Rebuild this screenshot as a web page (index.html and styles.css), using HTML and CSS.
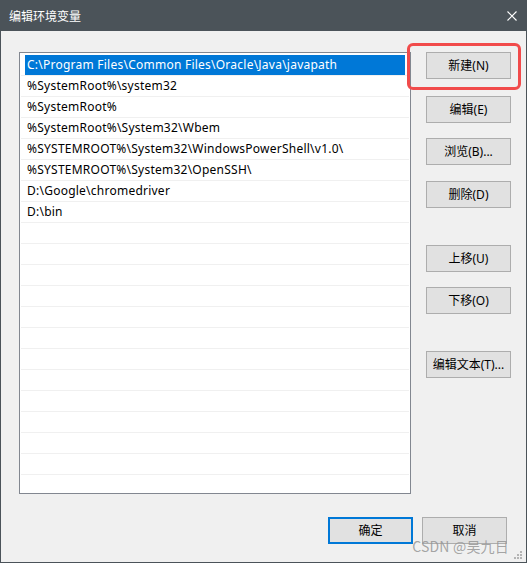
FILE: index.html
```html
<!DOCTYPE html>
<html lang="zh">
<head>
<meta charset="utf-8">
<title>编辑环境变量</title>
<link rel="stylesheet" href="styles.css">
</head>
<body>
<div class="window">
  <div class="titlebar">
    <span class="title">编辑环境变量</span>
    <svg class="close" width="10" height="10" viewBox="0 0 10 10"><path d="M0.5 0.5 L9.5 9.5 M9.5 0.5 L0.5 9.5" stroke="#ffffff" stroke-width="1.1" fill="none"/></svg>
  </div>
  <div class="body">
    <div class="main">
      <div class="list">
        <div class="row selected"><span>C:\Program Files\Common Files\Oracle\Java\javapath</span></div>
        <div class="row"><span>%SystemRoot%\system32</span></div>
        <div class="row"><span>%SystemRoot%</span></div>
        <div class="row"><span>%SystemRoot%\System32\Wbem</span></div>
        <div class="row"><span>%SYSTEMROOT%\System32\WindowsPowerShell\v1.0\</span></div>
        <div class="row"><span>%SYSTEMROOT%\System32\OpenSSH\</span></div>
        <div class="row"><span>D:\Google\chromedriver</span></div>
        <div class="row"><span>D:\bin</span></div>
        <div class="row"><span></span></div>
        <div class="row"><span></span></div>
        <div class="row"><span></span></div>
        <div class="row"><span></span></div>
        <div class="row"><span></span></div>
        <div class="row"><span></span></div>
        <div class="row"><span></span></div>
        <div class="row"><span></span></div>
        <div class="row"><span></span></div>
        <div class="row"><span></span></div>
        <div class="row"><span></span></div>
        <div class="row"><span></span></div>
        <div class="row last"><span></span></div>
      </div>
      <div class="side">
        <div class="highlight"><button class="btn">新建(N)</button></div>
        <button class="btn g1">编辑(E)</button>
        <button class="btn g2">浏览(B)...</button>
        <button class="btn g1">删除(D)</button>
        <button class="btn g3">上移(U)</button>
        <button class="btn g2">下移(O)</button>
        <button class="btn g3">编辑文本(T)...</button>
      </div>
    </div>
    <div class="footer">
      <button class="btn default">确定</button>
      <button class="btn">取消</button>
    </div>
    <div class="watermark">CSDN @吴九日</div>
    <svg class="grip" width="10" height="10" viewBox="0 0 10 10" fill="#b4b4b4"><rect x="7" y="1" width="2" height="2"/><rect x="4" y="4" width="2" height="2"/><rect x="7" y="4" width="2" height="2"/><rect x="1" y="7" width="2" height="2"/><rect x="4" y="7" width="2" height="2"/><rect x="7" y="7" width="2" height="2"/></svg>
  </div>
</div>
</body>
</html>
```

FILE: styles.css
```css
* { box-sizing: border-box; }
html, body { margin: 0; padding: 0; }
body {
  width: 527px;
  height: 563px;
  overflow: hidden;
  font-family: "Noto Sans", "Noto Sans CJK SC", sans-serif;
  font-size: 12px;
  color: #000;
}
.window {
  width: 527px;
  height: 563px;
  background: #f0f0f0;
  border: 1px solid #4b5359;
  border-top: none;
  display: flex;
  flex-direction: column;
}
.titlebar {
  height: 31px;
  flex: none;
  background: #4b5359;
  margin: 0 -1px;
  display: flex;
  align-items: center;
  justify-content: space-between;
  padding: 0 10px 0 9px;
}
.title {
  color: #ffffff;
  font-family: "Noto Sans CJK SC", sans-serif;
  font-size: 12px;
  line-height: 1;
}
.close { display: block; }
.body {
  position: relative;
  flex: 1;
  padding: 21px 0 0 18px;
}
.main {
  display: flex;
  align-items: flex-start;
}
.list {
  width: 392px;
  height: 442px;
  background: #ffffff;
  border: 1px solid #828790;
  padding: 2px 0 0 0;
  overflow: hidden;
}
.row {
  height: 21px;
  margin: 0 1px;
  border-bottom: 1px solid #f0f0f0;
  display: flex;
  padding: 0 4px;
}
.row.last { border-bottom: none; }
.row span {
  flex: 1;
  height: 20px;
  line-height: 20px;
  padding-left: 2px;
  white-space: nowrap;
  letter-spacing: 0.24px;
}
.row.selected span {
  background: #0078d7;
  color: #ffffff;
}
.side {
  margin-left: 15px;
  display: flex;
  flex-direction: column;
  position: relative;
}
.highlight {
  margin: -9px -8px 0 -19px;
  padding: 8px 7px 8px 18px;
  border: 3px solid #f14b4b;
  border-radius: 6px;
  display: flex;
  flex-direction: column;
  align-items: flex-start;
}
.highlight .btn { margin-left: -2px; margin-top: -2px; }
.btn {
  width: 85px;
  height: 27px;
  background: #e1e1e1;
  border: 1px solid #adadad;
  font-family: "Noto Sans", "Noto Sans CJK SC", sans-serif;
  font-size: 12px;
  color: #000;
  padding: 0;
  margin: 0;
  line-height: 25px;
  text-align: center;
}
.g1 { margin-top: 16px; }
.g2 { margin-top: 15px; }
.g3 { margin-top: 37px; }
.side .g1:first-of-type { margin-top: 6px; }
.footer {
  display: flex;
  justify-content: flex-end;
  gap: 9px;
  padding: 23px 19px 0 0;
}
.footer .btn { width: 85px; height: 27px; }
.btn.default {
  border: 2px solid #0078d7;
  line-height: 23px;
}
.watermark {
  position: absolute;
  right: 17px;
  bottom: 8px;
  font-family: "Noto Sans CJK SC", sans-serif;
  font-size: 14px;
  line-height: 16px;
  color: rgba(150, 150, 150, 0.85);
  letter-spacing: 0.2px;
}
.grip {
  position: absolute;
  right: 3px;
  bottom: 2px;
}
```
